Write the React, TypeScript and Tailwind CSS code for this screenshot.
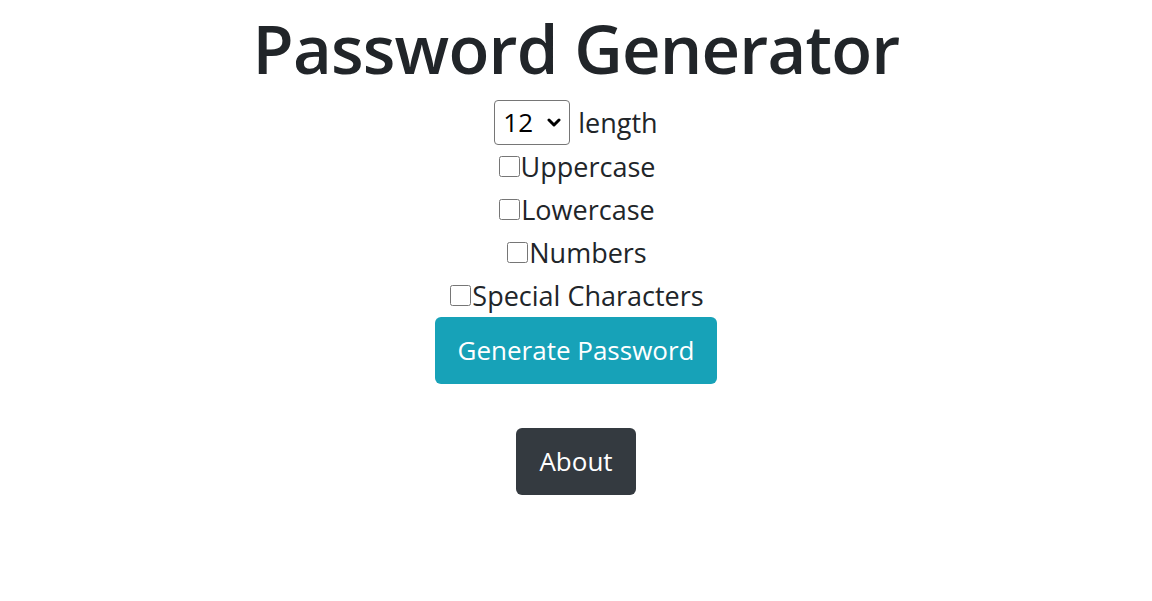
import { useState } from 'react';

const OPTIONS = ['Uppercase', 'Lowercase', 'Numbers', 'Special Characters'];

export default function App() {
  const [length, setLength] = useState('12');
  const [checked, setChecked] = useState<Record<string, boolean>>({});

  return (
    <div className="min-h-screen bg-white text-[#212529] font-['Open_Sans','Noto_Sans',sans-serif] flex flex-col items-center">
      <h1 className="text-[67px] leading-[1.2] font-semibold tracking-[-0.8px] mt-[8px] mb-[12px]">Password Generator</h1>

      <div className="flex items-center gap-[8px] text-[27px] leading-[1.5]">
        <div className="relative">
          <select
            value={length}
            onChange={(e) => setLength(e.target.value)}
            className="appearance-none h-[45px] w-[76px] border border-[#767676] rounded-[4px] pl-[8px] text-[26px] bg-white text-black"
          >
            {[8, 10, 12, 14, 16, 20].map((n) => (
              <option key={n} value={n}>{n}</option>
            ))}
          </select>
          <svg
            className="absolute right-[9px] top-[18px] pointer-events-none"
            width="14"
            height="10"
            viewBox="0 0 14 10"
          >
            <path d="M2 2 L7 7 L12 2" fill="none" stroke="#000" strokeWidth="3" strokeLinecap="round" strokeLinejoin="round" />
          </svg>
        </div>
        <span>length</span>
      </div>

      {OPTIONS.map((opt) => (
        <label key={opt} className="flex items-center text-[27px] leading-[43px]">
          <input
            type="checkbox"
            checked={!!checked[opt]}
            onChange={(e) => setChecked({ ...checked, [opt]: e.target.checked })}
            className="w-[21px] h-[21px] m-[2px] mr-[1px]"
          />
          {opt}
        </label>
      ))}

      <button className="bg-[#17a2b8] text-white text-[26px] px-[23px] h-[67px] rounded-[6px]">
        Generate Password
      </button>

      <button className="mt-[44px] bg-[#343a40] text-white text-[26px] px-[23px] h-[67px] rounded-[6px]">
        About
      </button>
    </div>
  );
}
